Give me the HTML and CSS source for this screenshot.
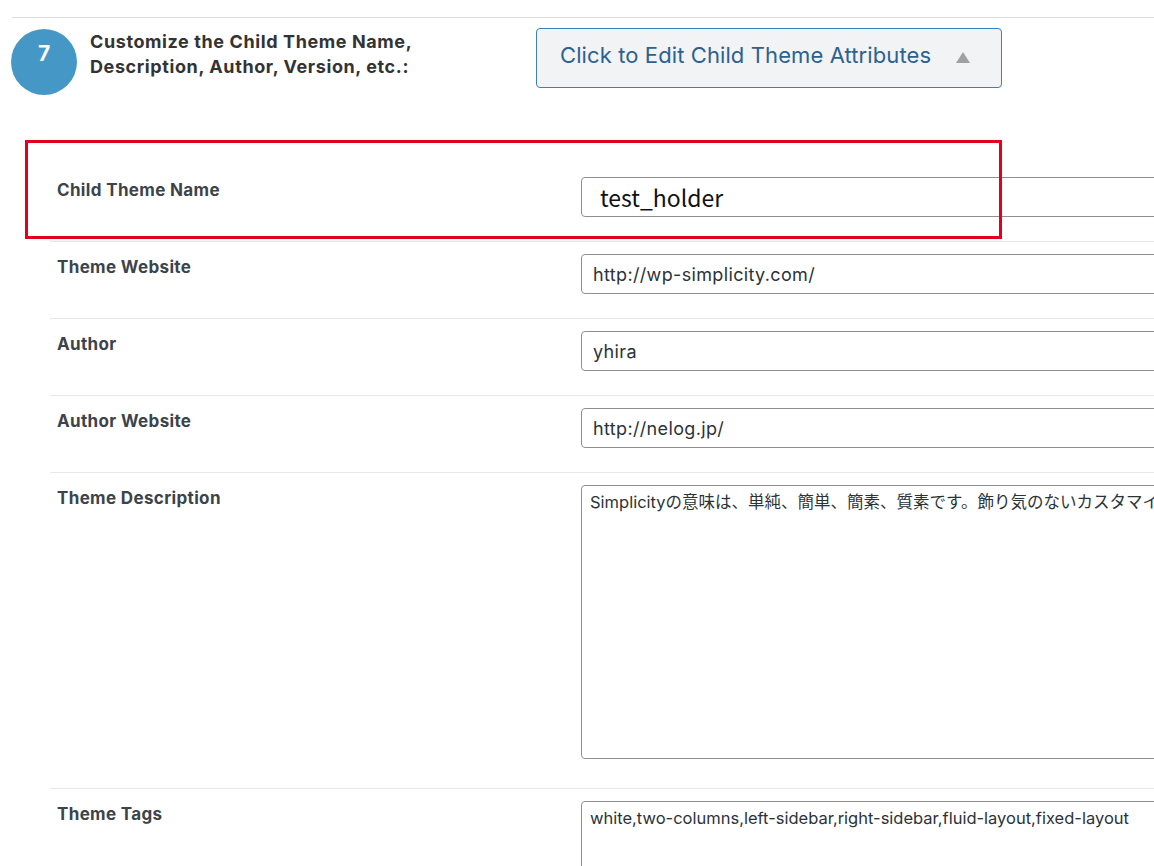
FILE: index.html
```html
<!DOCTYPE html>
<html lang="ja">
<head>
<meta charset="utf-8">
<title>Child Theme Attributes</title>
<link rel="stylesheet" href="styles.css">
</head>
<body>
<div class="page">
  <section class="step">
    <div class="step-num">7</div>
    <h2 class="step-title">Customize the Child Theme Name,<br>Description, Author, Version, etc.:</h2>
    <button class="toggle" type="button">
      <span class="toggle-label">Click to Edit Child Theme Attributes</span>
      <span class="toggle-arrow"></span>
    </button>
  </section>

  <div class="fields">
    <div class="highlight"></div>
    <div class="row row-first">
      <div class="label">Child Theme Name</div>
      <div class="field"><div class="input input-big">test_holder</div></div>
    </div>
    <div class="row">
      <div class="label">Theme Website</div>
      <div class="field"><div class="input">http://wp-simplicity.com/</div></div>
    </div>
    <div class="row">
      <div class="label">Author</div>
      <div class="field"><div class="input">yhira</div></div>
    </div>
    <div class="row">
      <div class="label">Author Website</div>
      <div class="field"><div class="input">http://nelog.jp/</div></div>
    </div>
    <div class="row row-area">
      <div class="label">Theme Description</div>
      <div class="field"><div class="textarea textarea-desc">Simplicityの意味は、単純、簡単、簡素、質素です。飾り気のないカスタマイ</div></div>
    </div>
    <div class="row row-last">
      <div class="label">Theme Tags</div>
      <div class="field"><div class="textarea textarea-tags">white,two-columns,left-sidebar,right-sidebar,fluid-layout,fixed-layout</div></div>
    </div>
  </div>
</div>
</body>
</html>
```

FILE: styles.css
```css
html, body {
  margin: 0;
  padding: 0;
  background: #ffffff;
}
body {
  width: 1154px;
  height: 866px;
  overflow: hidden;
  font-family: Inter, "Noto Sans", "Noto Sans CJK JP", sans-serif;
  color: #3c434a;
}
.page {
  width: 1154px;
}
.step {
  margin: 17px 0 0 12px;
  border-top: 1px solid #dcdcde;
  display: grid;
  grid-template-columns: 66px 458px 466px;
  align-items: start;
}
.step-num {
  width: 66px;
  height: 66px;
  margin: 11px 0 0 -1px;
  border-radius: 50%;
  background: #4597c6;
  color: #ffffff;
  font-weight: 700;
  font-size: 21px;
  line-height: 1;
  display: flex;
  justify-content: center;
  padding-top: 14px;
  box-sizing: border-box;
}
.step-title {
  margin: 11px 0 0 12px;
  font-size: 18px;
  line-height: 25px;
  letter-spacing: 0.6px;
  font-weight: 700;
  color: #333333;
}
.toggle {
  margin: 10px 0 0 0;
  height: 60px;
  width: 466px;
  border: 1px solid #3a80ba;
  border-radius: 4px;
  background: #f2f3f4;
  display: flex;
  align-items: center;
  padding: 0 0 6px 23px;
  box-sizing: border-box;
  font-family: Inter, "Noto Sans", sans-serif;
  cursor: pointer;
}
.toggle-label {
  font-size: 22px;
  letter-spacing: 0.1px;
  color: #2c6190;
}
.toggle-arrow {
  margin: 4px 0 0 25px;
  width: 0;
  height: 0;
  border-left: 7px solid transparent;
  border-right: 7px solid transparent;
  border-bottom: 11px solid #a0a0a0;
}
.fields {
  position: relative;
  margin: 69px 0 0 50px;
}
.highlight {
  position: absolute;
  left: -25px;
  top: -24px;
  width: 977px;
  height: 99px;
  border: 3px solid #e2001a;
  box-sizing: border-box;
  pointer-events: none;
  z-index: 2;
}
.row {
  display: grid;
  grid-template-columns: 524px 1fr;
  border-top: 1px solid #e6e7e8;
  padding: 12px 0 24px 7px;
}
.row-first {
  border-top-color: transparent;
}
.row-area {
  padding-bottom: 29px;
}
.row-last {
  padding-bottom: 0;
}
.label {
  padding-top: 2px;
  font-size: 17px;
  font-weight: 700;
  line-height: 22px;
  letter-spacing: 0.35px;
  color: #3c434a;
}
.field {
  overflow: hidden;
}
.input {
  width: 700px;
  height: 40px;
  box-sizing: border-box;
  border: 1px solid #8c8f94;
  border-radius: 4px;
  padding: 0 11px;
  display: flex;
  align-items: center;
  font-size: 18px;
  letter-spacing: 0.35px;
  color: #2c3338;
  white-space: nowrap;
}
.input-big {
  padding-left: 18px;
  font-family: "Noto Sans CJK JP", "Noto Sans", sans-serif;
  font-size: 23px;
  letter-spacing: 0;
  color: #111111;
}
.textarea {
  width: 700px;
  box-sizing: border-box;
  border: 1px solid #8c8f94;
  border-radius: 4px;
  padding: 6px 8px;
  font-size: 16.5px;
  line-height: 20px;
  color: #2c3338;
  white-space: nowrap;
  overflow: hidden;
}
.textarea-desc {
  height: 274px;
  font-family: Inter, "Noto Sans CJK JP", sans-serif;
}
.textarea-tags {
  height: 72px;
}
```
